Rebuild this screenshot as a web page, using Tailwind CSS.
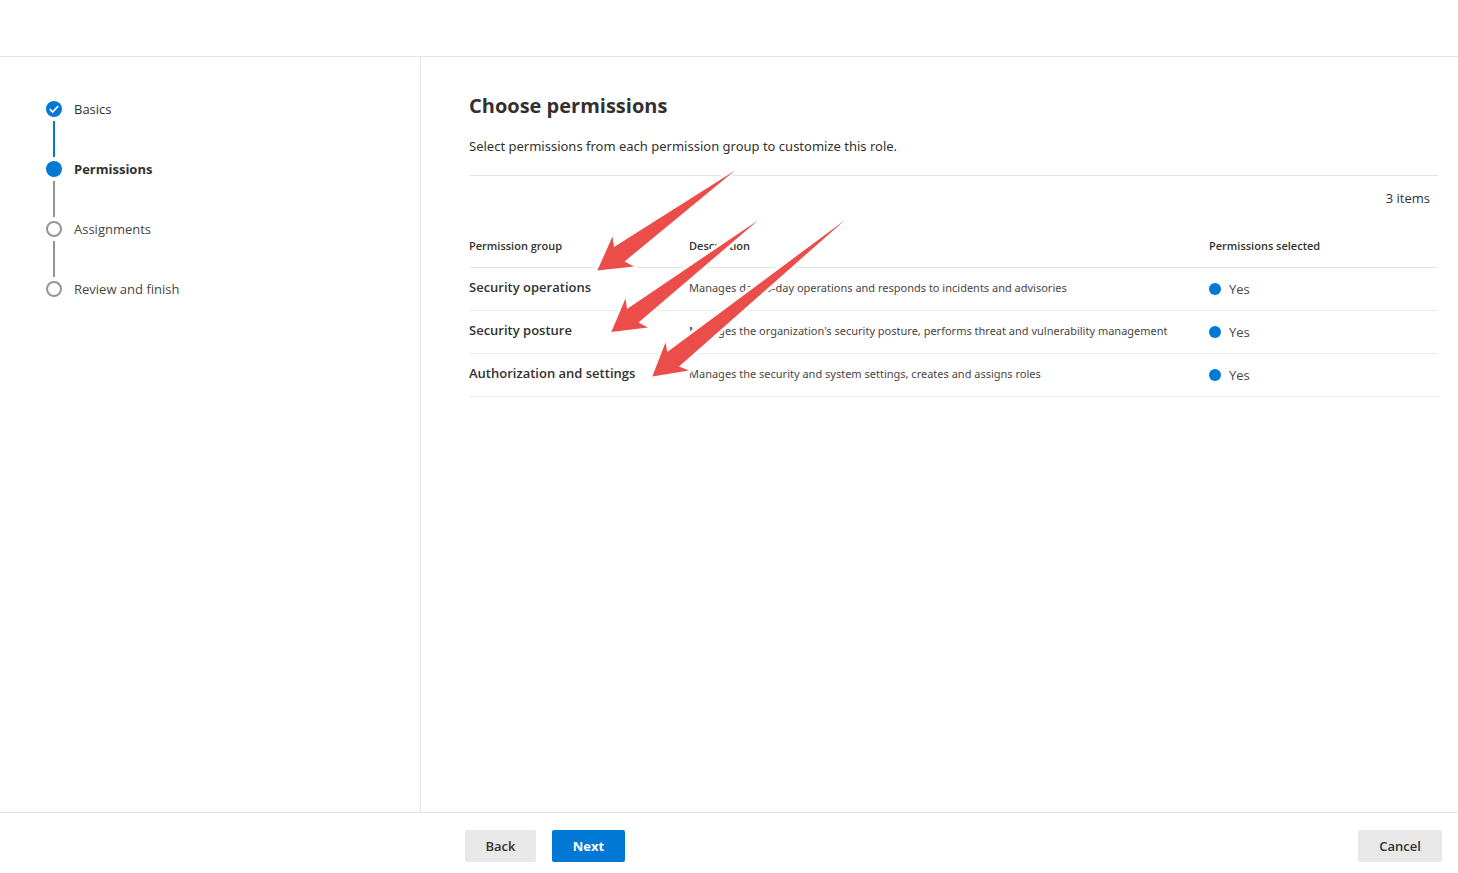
<!DOCTYPE html>
<html lang="en">
<head>
    <meta charset="UTF-8">
    <meta name="viewport" content="width=device-width, initial-scale=1.0">
    <script src="https://cdn.jsdelivr.net/npm/@tailwindcss/browser@4"></script>
    <title>Choose permissions</title>
</head>
<body class="relative flex min-h-screen flex-col bg-white font-['Open_Sans','Noto_Sans',sans-serif] text-[13px] leading-5 text-[#323130]">
    <header class="h-[57px] border-b border-[#e5e5e5]"></header>

    <div class="flex flex-1">
        <nav class="w-[421px] shrink-0 border-r border-[#e5e5e5] pt-[42px] pl-[46px]" aria-label="Steps">
            <ol>
                <li class="flex h-[60px] gap-3">
                    <div class="flex w-4 flex-col items-center gap-1 pt-0.5">
                        <svg class="size-4 shrink-0" viewBox="0 0 16 16">
                            <circle cx="8" cy="8" r="8" fill="#0078d4"/>
                            <path d="M3.8 8.2 L6.6 11 L12.2 5.2" fill="none" stroke="#fff" stroke-width="1.7"/>
                        </svg>
                        <span class="h-9 w-0.5 bg-[#0078d4]"></span>
                    </div>
                    <span>Basics</span>
                </li>
                <li class="flex h-[60px] gap-3" aria-current="step">
                    <div class="flex w-4 flex-col items-center gap-1 pt-0.5">
                        <span class="size-4 shrink-0 rounded-full bg-[#0078d4]"></span>
                        <span class="h-9 w-0.5 bg-[#979593]"></span>
                    </div>
                    <span class="font-bold">Permissions</span>
                </li>
                <li class="flex h-[60px] gap-3">
                    <div class="flex w-4 flex-col items-center gap-1 pt-0.5">
                        <span class="size-4 shrink-0 rounded-full border-2 border-[#979593]"></span>
                        <span class="h-9 w-0.5 bg-[#979593]"></span>
                    </div>
                    <span class="text-[#484644]">Assignments</span>
                </li>
                <li class="flex h-[60px] gap-3">
                    <div class="flex w-4 flex-col items-center gap-1 pt-0.5">
                        <span class="size-4 shrink-0 rounded-full border-2 border-[#979593]"></span>
                    </div>
                    <span class="text-[#484644]">Review and finish</span>
                </li>
            </ol>
        </nav>

        <main class="min-w-0 flex-1 pt-[35px] pr-5 pl-12">
            <h1 class="text-[20px] leading-[28px] font-bold">Choose permissions</h1>
            <p class="mt-4 border-b border-[#e5e5e5] pb-[19px] font-['Noto_Sans',sans-serif]">Select permissions from each permission group to customize this role.</p>
            <p class="pt-3 pr-2 text-right">3 items</p>

            <table class="mt-4 w-full table-fixed text-left">
                <thead>
                    <tr class="h-[43px] border-b border-[#e5e5e5] text-[11px]">
                        <th class="w-[220px] pt-0.5 font-semibold">Permission group</th>
                        <th class="w-[520px] pt-0.5 font-semibold">Description</th>
                        <th class="pt-0.5 font-semibold">Permissions selected</th>
                    </tr>
                </thead>
                <tbody class="align-top">
                    <tr class="h-[43px] border-b border-[#ebebeb]">
                        <td class="pt-[9px] font-semibold">Security operations</td>
                        <td class="pt-[10px] font-['Noto_Sans',sans-serif] text-[11px] text-[#484644]">Manages day-to-day operations and responds to incidents and advisories</td>
                        <td class="pt-[11px] text-[#484644]"><span class="flex items-center gap-2"><i class="size-3 rounded-full bg-[#0078d4]"></i>Yes</span></td>
                    </tr>
                    <tr class="h-[43px] border-b border-[#ebebeb]">
                        <td class="pt-[9px] font-semibold">Security posture</td>
                        <td class="pt-[10px] font-['Noto_Sans',sans-serif] text-[11px] text-[#484644]">Manages the organization's security posture, performs threat and vulnerability management</td>
                        <td class="pt-[11px] text-[#484644]"><span class="flex items-center gap-2"><i class="size-3 rounded-full bg-[#0078d4]"></i>Yes</span></td>
                    </tr>
                    <tr class="h-[43px] border-b border-[#ebebeb]">
                        <td class="pt-[9px] font-semibold">Authorization and settings</td>
                        <td class="pt-[10px] font-['Noto_Sans',sans-serif] text-[11px] text-[#484644]">Manages the security and system settings, creates and assigns roles</td>
                        <td class="pt-[11px] text-[#484644]"><span class="flex items-center gap-2"><i class="size-3 rounded-full bg-[#0078d4]"></i>Yes</span></td>
                    </tr>
                </tbody>
            </table>
        </main>
    </div>

    <footer class="flex h-[61px] gap-4 border-t border-[#e5e5e5] pt-[17px] pr-4 pl-[465px] text-[13px] font-semibold">
        <button class="h-8 w-[71px] rounded-xs bg-[#e8e8e8]" type="button">Back</button>
        <button class="h-8 w-[73px] rounded-xs bg-[#0078d4] font-bold text-white" type="button">Next</button>
        <button class="ml-auto h-8 w-[84px] rounded-xs bg-[#e8e8e8]" type="button">Cancel</button>
    </footer>

    <!-- callout arrows over the table -->
    <svg class="pointer-events-none absolute top-[160px] left-[580px]" width="280" height="230" viewBox="580 160 280 230" fill="#eb4d4a" stroke="#fff" stroke-width="6" stroke-linejoin="round" paint-order="stroke" aria-hidden="true">
        <path d="M735 170.5 L614 247 L612.5 236.5 L597.3 270.5 L634 266.5 L624.5 261.5 Z"/>
        <path d="M758.5 220 L627 309 L625.5 298.5 L611.3 332 L648 327.5 L638.5 322.5 Z"/>
        <path d="M845 220 L667.3 352 L665.5 342.5 L652.3 376.5 L689 370.5 L679 366.5 Z"/>
    </svg>
</body>
</html>
